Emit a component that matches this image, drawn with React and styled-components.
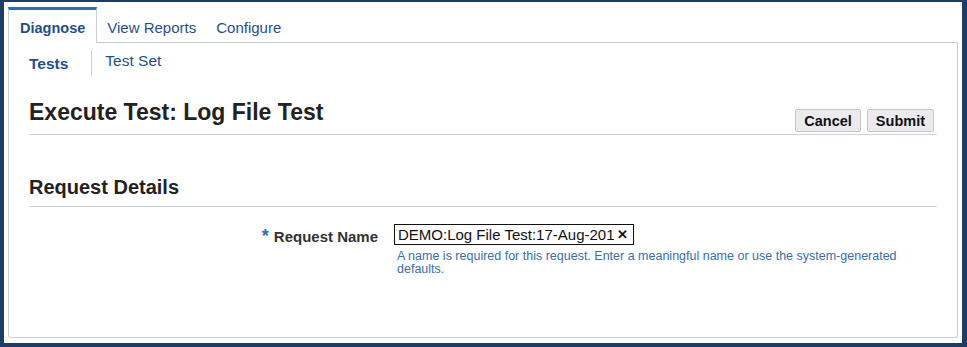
import styled, { createGlobalStyle } from 'styled-components';

const GlobalStyle = createGlobalStyle`
  html, body {
    margin: 0;
    padding: 0;
    background: #1d3d66;
  }
  body {
    font-family: "Liberation Sans", Arial, sans-serif;
  }
`

const Page = styled.div`
  box-sizing: border-box;
  width: 967px;
  height: 347px;
  padding: 2px 5px 4px 4px;
  background: #1d3d66;
`

const Panel = styled.div`
  box-sizing: border-box;
  height: 100%;
  background: #fff;
  padding: 5px 4px 5px 4px;
  display: flex;
  flex-direction: column;
`

const TabStrip = styled.div`
  display: flex;
  align-items: stretch;
  height: 36px;
`

const Tab = styled.div`
  box-sizing: border-box;
  display: flex;
  align-items: center;
  color: #1f4f8a;
  padding: ${p => (p.$active ? '2px 11px 0 11px' : '2px 10px 0 10px')};
  font-size: ${p => (p.$active ? '14.5px' : '15px')};
  font-weight: ${p => (p.$active ? 700 : 400)};
  border-top: ${p => (p.$active ? '3px solid #2b6cc0' : '3px solid transparent')};
  border-left: ${p => (p.$active ? '1px solid #c8ced6' : 'none')};
  border-right: ${p => (p.$active ? '1px solid #c8ced6' : 'none')};
  border-bottom: ${p => (p.$active ? 'none' : '1px solid #c8ced6')};
`

const TabFill = styled.div`
  flex: 1;
  border-bottom: 1px solid #c8ced6;
`

const Content = styled.div`
  flex: 1;
  border: 1px solid #c8ced6;
  border-top: none;
  border-radius: 0 0 3px 3px;
  padding: 0 20px 0 20px;
`

const SubTabs = styled.div`
  display: flex;
  align-items: flex-start;
  height: 26px;
  margin-top: 7px;
`

const SubTab = styled.div`
  font-size: 15.5px;
  color: #1f4f8a;
  font-weight: ${p => (p.$active ? 700 : 400)};
  padding: ${p => (p.$active ? '5px 23px 0 0' : '2px 0 0 13px')};
  border-right: ${p => (p.$active ? '1px solid #c8ced6' : 'none')};
  height: 26px;
  box-sizing: border-box;
`

const HeaderRow = styled.div`
  display: flex;
  align-items: flex-end;
  justify-content: space-between;
  border-bottom: 1px solid #c8d2dc;
  margin-top: 23px;
`

const Title = styled.h1`
  margin: 0;
  font-size: 23px;
  line-height: 27px;
  font-weight: 700;
  color: #222;
  padding-bottom: 8px;
`

const Buttons = styled.div`
  display: flex;
  gap: 6px;
  margin-right: 3px;
  margin-bottom: 2px;
`

const Button = styled.button`
  font-family: "Liberation Sans", Arial, sans-serif;
  font-size: 14.5px;
  font-weight: 700;
  color: #111;
  background: #ebebed;
  border: 1px solid #c8c8cc;
  border-radius: 2px;
  height: 23px;
  padding: 0 8px;
`

const SectionTitle = styled.h2`
  margin: 41px 0 0 0;
  font-size: 20px;
  line-height: 23px;
  font-weight: 700;
  color: #222;
  padding-bottom: 7px;
  border-bottom: 1px solid #c8d2dc;
`

const Form = styled.div`
  display: grid;
  grid-template-columns: 349px auto;
  column-gap: 16px;
  margin-top: 17px;
`

const Label = styled.div`
  text-align: right;
  font-size: 15px;
  font-weight: 700;
  color: #333;
  padding-top: 2px;
`

const Star = styled.span`
  color: #2d6fb8;
  font-size: 18px;
  margin-right: 5px;
`

const InputBox = styled.div`
  display: flex;
  align-items: center;
  width: 240px;
  height: 21px;
  box-sizing: border-box;
  border: 1px solid #111;
  background: #fff;
`

const Input = styled.input`
  flex: 1;
  min-width: 0;
  border: none;
  outline: none;
  padding: 0 0 0 3px;
  font-family: "Liberation Sans", Arial, sans-serif;
  font-size: 15px;
  color: #111;
  background: transparent;
`

const Clear = styled.span`
  font-size: 13px;
  font-weight: 700;
  color: #111;
  padding: 0 5px 0 3px;
`

const Help = styled.div`
  grid-column: 2;
  font-size: 12.5px;
  color: #3b6ea5;
  line-height: 13px;
  margin-top: 3px;
  padding-left: 3px;
  max-width: 520px;
`

export default function App() {
  return (
    <>
      <GlobalStyle />
      <Page>
        <Panel>
          <TabStrip>
            <Tab $active>Diagnose</Tab>
            <Tab>View Reports</Tab>
            <Tab>Configure</Tab>
            <TabFill />
          </TabStrip>
          <Content>
            <SubTabs>
              <SubTab $active>Tests</SubTab>
              <SubTab>Test Set</SubTab>
            </SubTabs>
            <HeaderRow>
              <Title>Execute Test: Log File Test</Title>
              <Buttons>
                <Button>Cancel</Button>
                <Button>Submit</Button>
              </Buttons>
            </HeaderRow>
            <SectionTitle>Request Details</SectionTitle>
            <Form>
              <Label><Star>*</Star>Request Name</Label>
              <InputBox>
                <Input readOnly value="DEMO:Log File Test:17-Aug-2017 10:32:05" />
                <Clear>✕</Clear>
              </InputBox>
              <Help>
                A name is required for this request. Enter a meaningful name or use the system-generated defaults.
              </Help>
            </Form>
          </Content>
        </Panel>
      </Page>
    </>
  );
}
